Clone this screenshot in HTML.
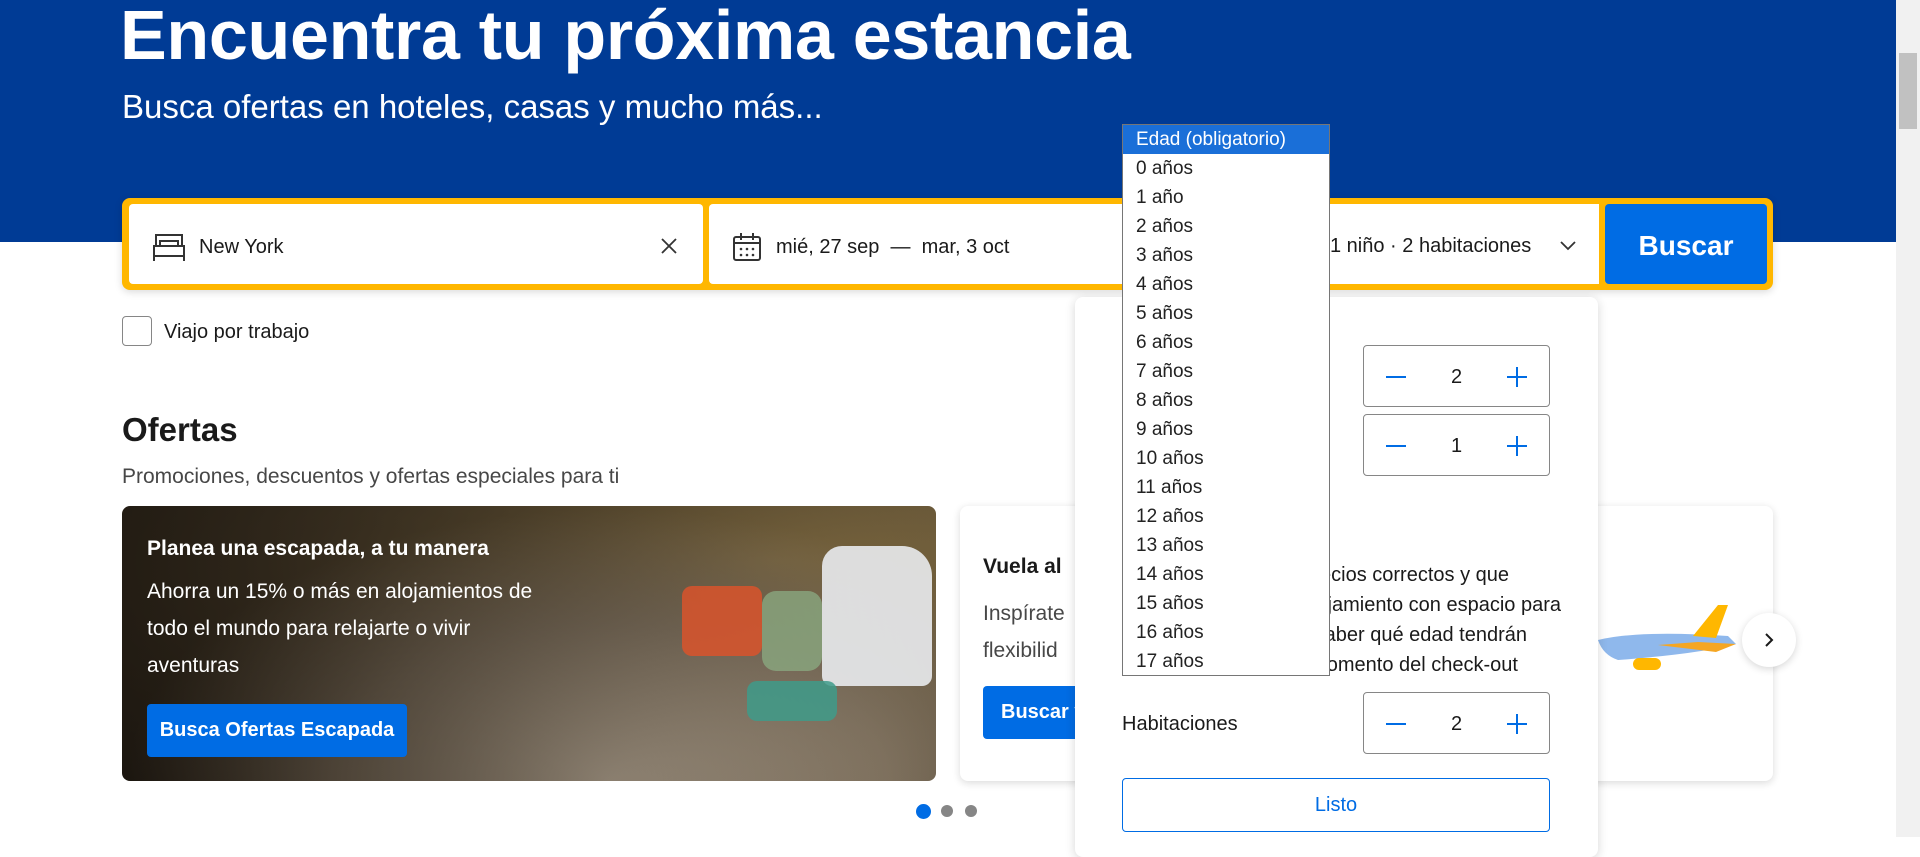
<!DOCTYPE html>
<html><head><meta charset="utf-8"><style>
*{box-sizing:border-box;margin:0;padding:0}
body{width:1920px;height:837px;overflow:hidden;background:#fff;font-family:"Liberation Sans",sans-serif;color:#1a1a1a;position:relative}
.abs{position:absolute}
.hdr{left:0;top:0;width:1896px;height:242px;background:#003b95}
h1{position:absolute;left:120px;top:-5px;font-size:70px;font-weight:bold;color:#fff;letter-spacing:-0.3px}
.sub{left:122px;top:88px;font-size:33px;color:#fff}
.sbox{left:122px;top:198px;width:1651px;height:92px;background:#ffb700;border-radius:8px;box-shadow:0 2px 8px rgba(0,0,0,.15)}
.fld{background:#fff;border-radius:4px;position:absolute;top:6px;height:80px;display:flex;align-items:center;font-size:20px;padding-top:6px}
.btn{background:#006ce4;color:#fff;border-radius:4px;position:absolute;font-weight:bold;display:flex;align-items:center;justify-content:center}
.card{border-radius:8px;overflow:hidden}
.step{position:absolute;left:1363px;width:187px;height:62px;border:1px solid #868686;border-radius:4px;font-size:20px}
.step .m{position:absolute;left:22px;top:30px;width:20px;height:2px;background:#006ce4}
.step .p1{position:absolute;right:22px;top:30px;width:20px;height:2px;background:#006ce4}
.step .p2{position:absolute;right:31px;top:21px;width:2px;height:20px;background:#006ce4}
.step .v{position:absolute;left:0;right:0;top:20px;text-align:center}
.dd{left:1122px;top:124px;width:208px;height:552px;background:#fff;border:1px solid #767676;font-size:19px;color:#222}
.dd div{height:29px;line-height:30px;padding-left:13px}
.pl{position:absolute;font-size:20px;white-space:nowrap;text-align:right;color:#1a1a1a}
</style></head><body>
<div class="abs hdr"></div>
<h1>Encuentra tu próxima estancia</h1>
<div class="abs sub">Busca ofertas en hoteles, casas y mucho más...</div>

<div class="abs sbox">
 <div class="fld" style="left:7px;width:574px">
  <svg style="margin-left:23px" width="34" height="30" viewBox="0 0 34 30" fill="none" stroke="#333" stroke-width="2"><path d="M4 14V3h26v11M2 14h30v10H2zM2 24v5M32 24v5M8 14V9h18v5"/></svg>
  <span style="margin-left:13px">New York</span>
  <svg style="position:absolute;right:26px;top:34px" width="16" height="16" viewBox="0 0 16 16" stroke="#333" stroke-width="1.8"><path d="M1 1l14 14M15 1L1 15"/></svg>
 </div>
 <div class="fld" style="left:587px;width:890px;border-radius:4px 0 0 4px">
  <svg style="margin-left:23px" width="30" height="30" viewBox="0 0 30 30" fill="none" stroke="#333" stroke-width="2"><rect x="2" y="5" width="26" height="23" rx="2"/><path d="M2 11h26M9 1v7M21 1v7"/><g fill="#333" stroke="none"><circle cx="9" cy="17" r="1.3"/><circle cx="15" cy="17" r="1.3"/><circle cx="21" cy="17" r="1.3"/><circle cx="9" cy="23" r="1.3"/><circle cx="15" cy="23" r="1.3"/><circle cx="21" cy="23" r="1.3"/></g></svg>
  <span style="margin-left:14px">mié, 27 sep&nbsp; — &nbsp;mar, 3 oct</span>
 </div>
 <div class="fld" style="left:1290px;width:187px;border-radius:0 4px 4px 0"></div>
 <div class="abs" style="left:1208px;top:37px;font-size:20px">1 niño · 2 habitaciones</div>
 <svg class="abs" style="left:1438px;top:43px" width="16" height="10" viewBox="0 0 16 10" fill="none" stroke="#333" stroke-width="1.8"><path d="M1 1l7 7 7-7"/></svg>
 <div class="btn" style="left:1483px;top:6px;width:162px;height:80px;font-size:28px;padding-top:4px">Buscar</div>
</div>

<div class="abs" style="left:122px;top:316px;width:30px;height:30px;border:1px solid #868686;border-radius:4px"></div>
<div class="abs" style="left:164px;top:321px;font-size:20px">Viajo por trabajo</div>

<div class="abs" style="left:122px;top:411px;font-size:33px;font-weight:bold">Ofertas</div>
<div class="abs" style="left:122px;top:465px;font-size:21px;color:#474747">Promociones, descuentos y ofertas especiales para ti</div>

<div class="abs card" style="left:122px;top:506px;width:814px;height:275px;background:linear-gradient(90deg,rgba(20,15,10,.7) 0%,rgba(20,15,10,.4) 50%,rgba(20,15,10,.1) 100%),radial-gradient(ellipse at 60% 100%,#c7b8a3 0%,#8f806b 40%,transparent 70%),radial-gradient(ellipse at 80% 20%,#8d7648 0%,#5a4c34 50%,#2c261c 100%)">
 <div class="abs" style="left:560px;top:80px;width:80px;height:70px;background:#d9532b;border-radius:10px;opacity:.85"></div>
 <div class="abs" style="left:640px;top:85px;width:60px;height:80px;background:#8aa880;border-radius:14px;opacity:.8"></div>
 <div class="abs" style="left:700px;top:40px;width:110px;height:140px;background:#e9ebee;border-radius:20px 30px 10px 10px;opacity:.9"></div>
 <div class="abs" style="left:625px;top:175px;width:90px;height:40px;background:#3e9b8a;border-radius:10px;opacity:.85"></div>
</div>
<div class="abs" style="left:147px;top:537px;font-size:21px;font-weight:bold;color:#fff">Planea una escapada, a tu manera</div>
<div class="abs" style="left:147px;top:573px;font-size:21px;color:#fff;line-height:37px;width:420px">Ahorra un 15% o más en alojamientos de todo el mundo para relajarte o vivir aventuras</div>
<div class="btn" style="left:147px;top:704px;width:260px;height:53px;font-size:20px">Busca Ofertas Escapada</div>

<div class="abs card" style="left:960px;top:506px;width:813px;height:275px;background:#fff;box-shadow:0 2px 8px rgba(26,26,26,.16)"></div>
<div class="abs" style="left:983px;top:555px;font-size:21px;font-weight:bold">Vuela al</div>
<div class="abs" style="left:983px;top:595px;font-size:21px;color:#474747;line-height:37px">Inspírate<br>flexibilid</div>
<div class="btn" style="left:983px;top:686px;width:120px;height:53px;font-size:20px;justify-content:flex-start;padding-left:18px">Buscar v</div>
<svg class="abs" style="left:1598px;top:600px" width="140" height="85" viewBox="0 0 140 85"><path d="M0 40 Q40 30 130 36 L138 44 Q100 54 20 60 Q5 55 0 40Z" fill="#8fb8ec"/><path d="M95 36 L120 5 L130 5 L118 38Z" fill="#ffb700"/><path d="M60 45 L100 42 L138 44 L118 52Z" fill="#f5a623"/><rect x="35" y="58" width="28" height="12" rx="6" fill="#ffb700"/></svg>
<div class="abs" style="left:1742px;top:613px;width:54px;height:54px;border-radius:50%;background:#fff;box-shadow:0 2px 8px rgba(0,0,0,.16)"></div>
<svg class="abs" style="left:1763px;top:632px" width="12" height="16" viewBox="0 0 12 16" fill="none" stroke="#1a1a1a" stroke-width="2"><path d="M3 2l6 6-6 6"/></svg>

<div class="abs" style="left:916px;top:804px;width:15px;height:15px;border-radius:50%;background:#006ce4"></div>
<div class="abs" style="left:941px;top:805px;width:12px;height:12px;border-radius:50%;background:#868686"></div>
<div class="abs" style="left:965px;top:805px;width:12px;height:12px;border-radius:50%;background:#868686"></div>

<div class="abs" style="left:1075px;top:297px;width:523px;height:560px;background:#fff;border-radius:8px;box-shadow:0 2px 10px rgba(26,26,26,.18)"></div>
<div class="step" style="top:345px"><div class="m"></div><div class="v">2</div><div class="p1"></div><div class="p2"></div></div>
<div class="step" style="top:414px"><div class="m"></div><div class="v">1</div><div class="p1"></div><div class="p2"></div></div>
<div class="pl" style="right:411px;top:564px">Para ver los precios correctos y que</div>
<div class="pl" style="right:359px;top:594px">encuentres un alojamiento con espacio para</div>
<div class="pl" style="right:393px;top:624px">todos, necesitamos saber qué edad tendrán</div>
<div class="pl" style="right:402px;top:654px">los niños en el momento del check-out</div>
<div class="step" style="top:692px"><div class="m"></div><div class="v">2</div><div class="p1"></div><div class="p2"></div></div>
<div class="abs" style="left:1122px;top:713px;font-size:20px">Habitaciones</div>
<div class="abs" style="left:1122px;top:778px;width:428px;height:54px;border:1px solid #006ce4;border-radius:4px;color:#006ce4;font-size:20px;display:flex;align-items:center;justify-content:center">Listo</div>

<div class="abs dd">
<div style="background:#1a6fd8;color:#fff">Edad (obligatorio)</div>
<div>0 años</div><div>1 año</div><div>2 años</div><div>3 años</div><div>4 años</div><div>5 años</div><div>6 años</div><div>7 años</div><div>8 años</div><div>9 años</div><div>10 años</div><div>11 años</div><div>12 años</div><div>13 años</div><div>14 años</div><div>15 años</div><div>16 años</div><div>17 años</div>
</div>

<div class="abs" style="left:1896px;top:0;width:24px;height:837px;background:#f1f1f1"></div>
<div class="abs" style="left:1899px;top:53px;width:18px;height:76px;background:#c1c1c1"></div>
</body></html>
